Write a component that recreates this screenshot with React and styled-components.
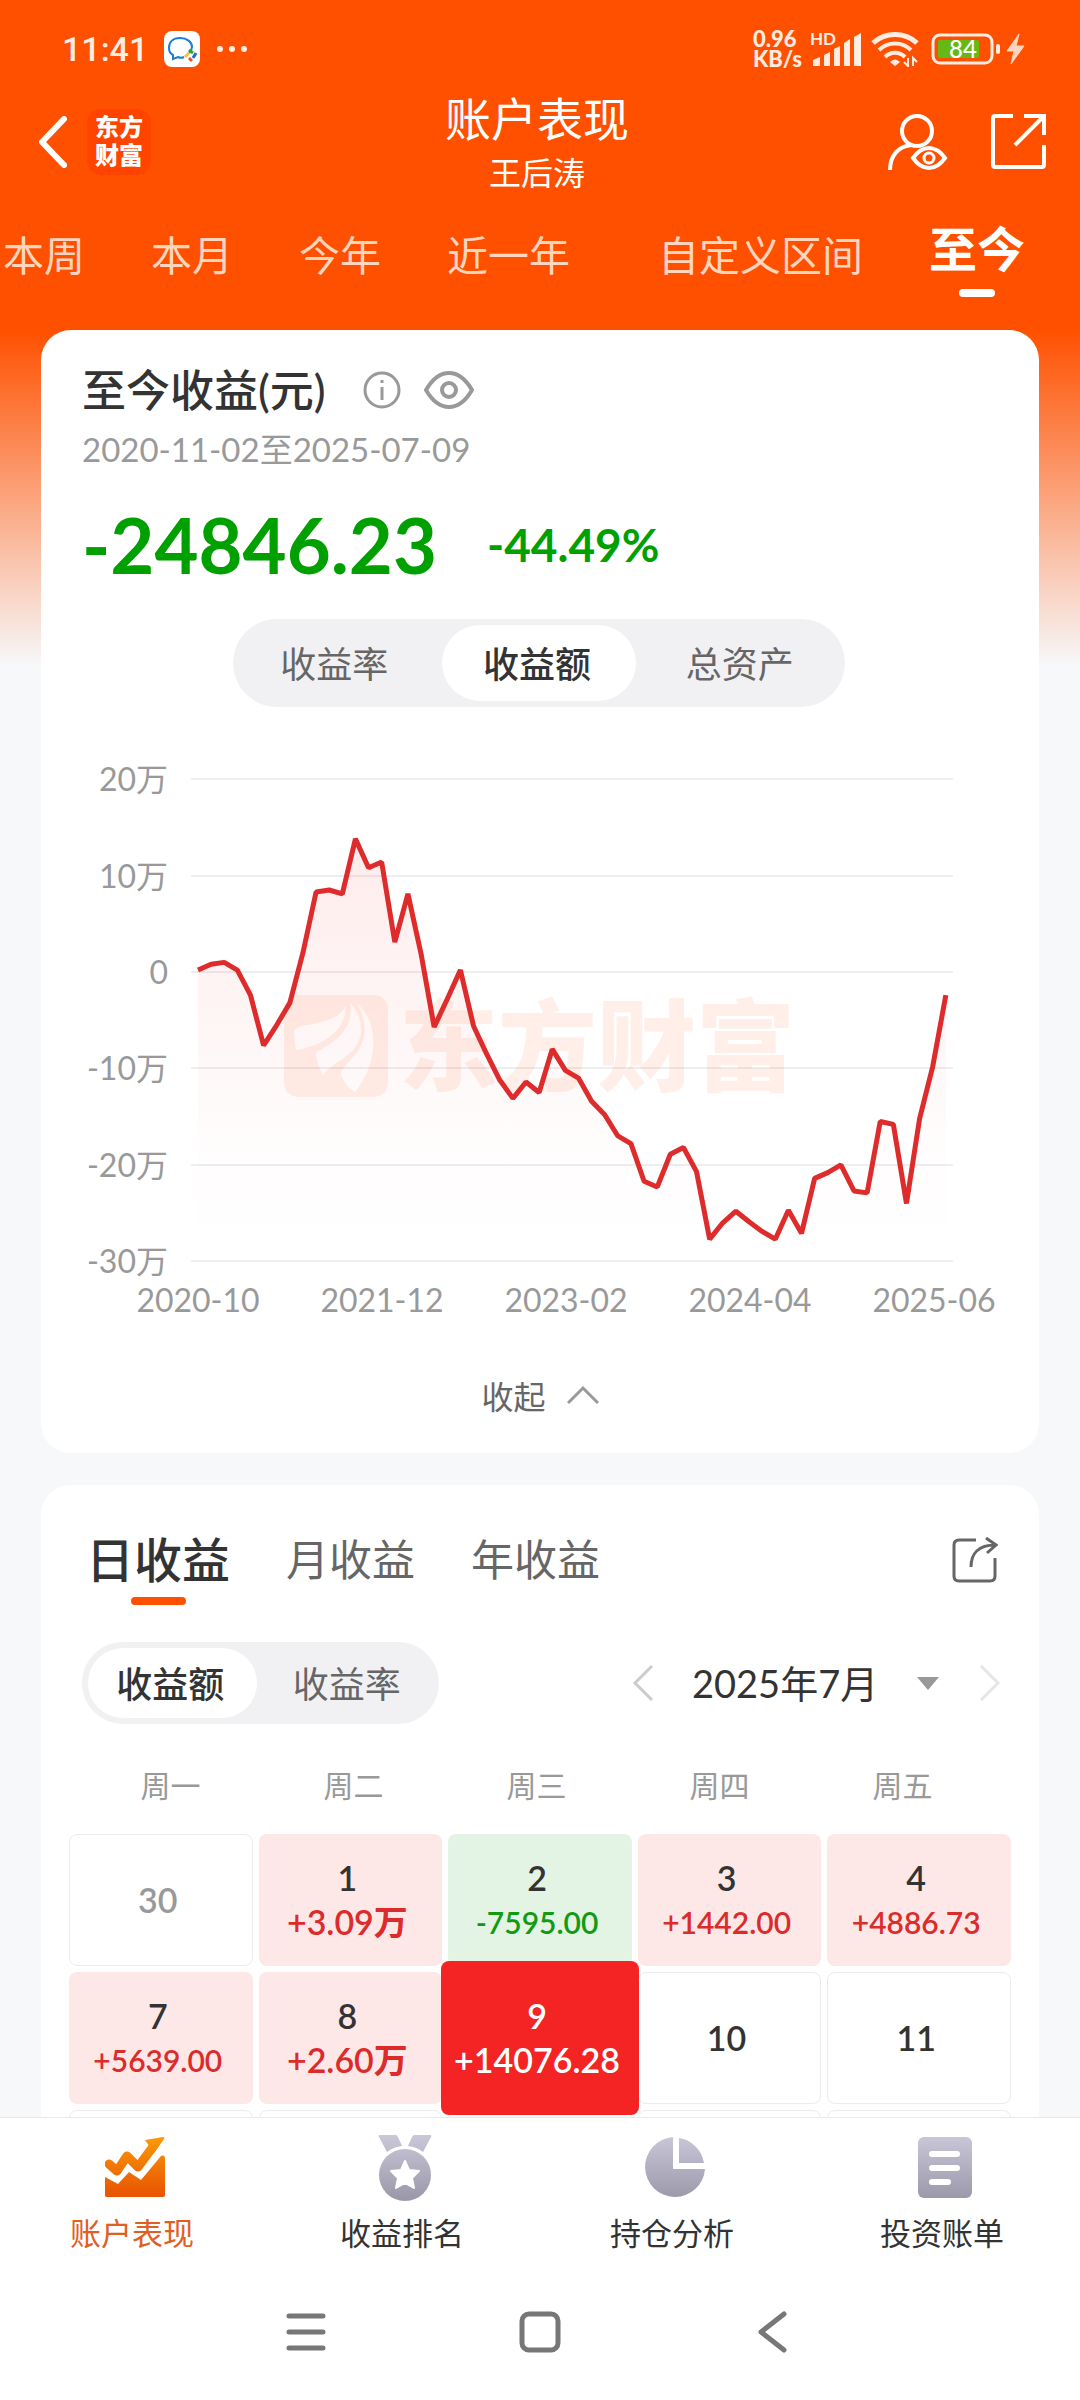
import { useState } from "react";
import styled, { createGlobalStyle } from "styled-components";

const GlobalStyle = createGlobalStyle`
    * {
        box-sizing: border-box;
    }
    body {
        margin: 0;
        background: #f7f8fa;
        font-family: Lato, "Noto Sans CJK SC", sans-serif;
        color: #333;
    }
    button, select {
        font: inherit;
        color: inherit;
        border: 0;
        padding: 0;
        margin: 0;
        background: none;
        cursor: pointer;
    }
    svg {
        display: block;
        flex: none;
    }
`;

const Page = styled.div`
    display: flex;
    flex-direction: column;
    height: 100vh;
`;

const Header = styled.header`
    background: #ff5000;
    color: #fff;
    flex: none;
`;

// phone status bar
const StatusBar = styled.div`
    display: flex;
    justify-content: space-between;
    height: 90px;
    padding: 8px 55px 0 62px;
    color: #ffece2;
`;

const StatusGroup = styled.div`
    display: flex;
    align-items: center;
    gap: ${props => props.$gap}px;
`;

const Clock = styled.span`
    font-family: Roboto, sans-serif;
    font-size: 34px;
    font-weight: 500;
`;

const NetSpeed = styled.span`
    font-size: 22px;
    font-weight: 900;
    line-height: 20px;
`;

const TitleBar = styled.div`
    display: grid;
    grid-template-columns: 1fr auto 1fr;
    align-items: center;
    padding: 0 33px 0 27px;
`;

const TitleSide = styled.div`
    display: flex;
    align-items: center;
    justify-content: ${props => props.$end ? 'flex-end' : 'flex-start'};
    gap: ${props => props.$end ? 42 : 20}px;
`;

const IconButton = styled.button`
    display: flex;
    align-items: center;
    justify-content: center;
`;

const BackButton = styled(IconButton)`
    padding-left: 12px;
`;

const BrandLogo = styled.span`
    width: 64px;
    height: 66px;
    padding: 4px 0;
    border-radius: 14px;
    background: #ff4400;
    font-size: 24px;
    font-weight: 900;
    line-height: 28px;
    text-align: center;
`;

const TitleText = styled.div`
    text-align: center;
    h1 {
        margin: 0;
        font-size: 46px;
        font-weight: 400;
        line-height: 58px;
    }
    p {
        margin: 5px 0 0;
        font-size: 32px;
        line-height: 40px;
    }
`;

const RangeTabs = styled.nav`
    display: flex;
    gap: 66px;
    height: 137px;
    padding-left: 3px;
    overflow: hidden;
`;

const RangeTab = styled.button`
    display: flex;
    flex-direction: column;
    align-items: ${props => props.$active ? 'center' : 'flex-start'};
    flex: none;
    min-width: ${props => props.$wide ? '145px' : '0'};
    padding-top: ${props => props.$active ? 28 : 35}px;
    font-size: ${props => props.$active ? 48 : 41}px;
    font-weight: ${props => props.$active ? 700 : 400};
    line-height: 56px;
    color: ${props => props.$active ? '#fff' : '#ffd5c0'};
    white-space: nowrap;
`;

const TabLine = styled.span`
    width: ${props => props.$width}px;
    height: 8px;
    margin-top: ${props => props.$top}px;
    border-radius: 4px;
    background: ${props => props.$color};
`;

const Main = styled.main`
    flex: 1;
    min-height: 0;
    overflow-y: auto;
    scrollbar-width: none;
    padding: 0 41px 32px;
    background: linear-gradient(#ff5000, #f7f8fa 335px) no-repeat #f7f8fa;
    background-size: 100% 335px;
`;

const Card = styled.section`
    background: #fff;
    border-radius: 30px;
    & + & {
        margin-top: 32px;
    }
`;

const Summary = styled.div`
    padding: 32px 43px 0 41px;
`;

const SummaryTitle = styled.div`
    display: flex;
    align-items: center;
    h2 {
        margin: 0 36px 0 0;
        font-size: 44px;
        font-weight: 500;
        line-height: 56px;
    }
    button + button {
        margin-left: 22px;
    }
`;

const DateRange = styled.p`
    margin: 9px 0 0;
    font-size: 33px;
    line-height: 44px;
    color: #999;
`;

const Totals = styled.div`
    display: flex;
    align-items: center;
    gap: 50px;
    margin-top: 29px;
    line-height: 90px;
    color: #00a000;
`;

const TotalAmount = styled.strong`
    font-size: 76px;
    font-weight: 700;
`;

const TotalRate = styled.span`
    font-size: 46px;
    font-weight: 700;
`;

const Segmented = styled.div`
    display: flex;
    gap: 8px;
    width: ${props => props.$width};
    height: ${props => props.$height}px;
    margin: ${props => props.$margin || 0};
    padding: 6px;
    border-radius: 44px;
    background: #f1f1f4;
`;

const Segment = styled.button`
    flex: 1;
    padding: 0 4px 3px 0;
    border-radius: 40px;
    font-size: 36px;
    font-weight: ${props => props.$active ? 500 : 400};
    color: ${props => props.$active ? '#333' : '#666'};
    background: ${props => props.$active ? '#fff' : 'transparent'};
`;

const ChartSvg = styled.svg`
    width: 100%;
    height: auto;
    text {
        font-size: 32px;
        fill: #999;
    }
    text.mark {
        font-size: 99px;
        font-weight: 900;
        fill: #ff5000;
        fill-opacity: 0.09;
    }
`;

const CollapseButton = styled.button`
    display: flex;
    align-items: center;
    justify-content: center;
    gap: 21px;
    width: 100%;
    height: 113px;
    padding-bottom: 4px;
    font-size: 32px;
    color: #666;
`;

const ProfitHead = styled.div`
    display: flex;
    align-items: flex-start;
    padding: 43px 41px 0 45px;
`;

const ProfitTab = styled.button`
    display: flex;
    flex-direction: column;
    align-items: center;
    margin-right: 56px;
    font-size: ${props => props.$active ? 48 : 43}px;
    font-weight: ${props => props.$active ? 500 : 400};
    line-height: 64px;
    color: ${props => props.$active ? '#333' : '#666'};
`;

const ShareButton = styled(IconButton)`
    height: 64px;
    margin-left: auto;
`;

const FilterRow = styled.div`
    display: flex;
    align-items: center;
    justify-content: space-between;
    padding: 0 38px 0 41px;
    margin-top: 37px;
`;

const MonthPicker = styled.div`
    display: flex;
    align-items: center;
`;

const MonthSelect = styled.select`
    appearance: none;
    margin: 0 38px;
    font-size: 38px;
    line-height: 56px;
    outline: none;
`;

const Caret = styled.span`
    margin-right: 40px;
    border: 11px solid transparent;
    border-top: 13px solid #999;
    border-bottom: 0;
`;

const Calendar = styled.table`
    display: block;
    padding: 39px 28px 28px;
    thead, tbody {
        display: block;
    }
    tr {
        display: grid;
        grid-template-columns: repeat(5, 1fr);
    }
    thead tr {
        padding: 0 17px 27px 10px;
    }
    tbody tr {
        gap: 6px;
        margin-bottom: 6px;
    }
`;

const WeekDay = styled.th`
    padding: 0;
    font-size: 30px;
    font-weight: 400;
    line-height: 44px;
    color: #999;
`;

const DayCell = styled.td`
    position: relative;
    height: 132px;
    padding: 0;
`;

const dayColors = {
    up: { bg: '#fde8e7', text: '#dc2b2b' },
    down: { bg: '#e3f4e5', text: '#129a12' },
    today: { bg: '#f42424', text: '#fff' },
    none: { bg: '#fff', text: '#333' },
};

// the selected day is larger than its cell and lies over the ones next to it
const DayButton = styled.button`
    position: absolute;
    inset: ${props => props.$kind === 'today' ? '-11px -7px' : '0'};
    z-index: ${props => props.$kind === 'today' ? 1 : 0};
    display: flex;
    flex-direction: column;
    align-items: center;
    justify-content: center;
    padding-right: 6px;
    border: ${props => props.$kind === 'none' ? '1px solid #ececec' : '0'};
    border-radius: 8px;
    background: ${props => dayColors[props.$kind].bg};
    font-size: 34px;
    font-weight: 600;
    line-height: 44px;
    color: ${props => props.$muted ? '#999' : props.$kind === 'today' ? '#fff' : '#333'};
`;

const DayAmount = styled.span`
    font-size: ${props => props.$small ? 30 : 34}px;
    color: ${props => dayColors[props.$kind].text};
`;

const BottomNav = styled.nav`
    display: grid;
    grid-template-columns: repeat(4, 1fr);
    flex: none;
    border-top: 1px solid #e9e9e9;
    background: #fff;
`;

const NavItem = styled.a`
    display: flex;
    flex-direction: column;
    align-items: center;
    gap: 10px;
    padding: 17px 0 9px;
    font-size: 31px;
    line-height: 44px;
    color: ${props => props.$active ? '#e0601f' : '#333'};
    text-decoration: none;
`;

const NavLabel = styled.span`
    padding-right: 6px;
`;

const SystemBar = styled.div`
    display: flex;
    justify-content: center;
    align-items: center;
    gap: 193px;
    flex: none;
    height: 136px;
    background: #fff;
`;

const ranges = ['本周', '本月', '今年', '近一年', '自定义区间', '至今'];

// total profit by month, in 万
const profits = [
    0.2, 0.8, 1, 0.2, -2.4, -7.6, -5.5, -3.2, 2, 8.3, 8.5, 8.1, 13.8, 10.8, 11.4, 3.1, 8.1, 1.9, -5.7,
    -2.8, 0.2, -5.6, -8.5, -11.2, -13.1, -11.4, -12.5, -8, -10.2, -11, -13.4, -14.8, -17, -17.8, -21.7,
    -22.3, -18.9, -18.2, -20.7, -27.7, -26, -24.8, -25.9, -26.9, -27.7, -24.7, -27.1, -21.4, -20.8, -20,
    -22.7, -22.9, -15.5, -15.8, -24, -15.2, -9.8, -2.4,
];
const yTicks = [20, 10, 0, -10, -20, -30];
const xTicks = ['2020-10', '2021-12', '2023-02', '2024-04', '2025-06'];

const weekDays = ['周一', '周二', '周三', '周四', '周五'];
const weeks = [
    [
        { day: 30, kind: 'none', muted: true },
        { day: 1, kind: 'up', amount: '+3.09万' },
        { day: 2, kind: 'down', amount: '-7595.00' },
        { day: 3, kind: 'up', amount: '+1442.00' },
        { day: 4, kind: 'up', amount: '+4886.73' },
    ],
    [
        { day: 7, kind: 'up', amount: '+5639.00' },
        { day: 8, kind: 'up', amount: '+2.60万' },
        { day: 9, kind: 'today', amount: '+14076.28' },
        { day: 10, kind: 'none' },
        { day: 11, kind: 'none' },
    ],
    Array(5).fill({ kind: 'none' }),
];

function Chevron({ width, height, points, color, stroke = 3, round }) {
    return (
        <svg width={width} height={height} viewBox={`0 0 ${width} ${height}`} fill="none" aria-hidden="true">
            <polyline points={points} stroke={color} strokeWidth={stroke}
                strokeLinecap={round ? 'round' : 'butt'} strokeLinejoin={round ? 'round' : 'miter'} />
        </svg>
    );
}

function PhoneStatus() {
    return (
        <StatusBar>
            <StatusGroup $gap={16}>
                <Clock>11:41</Clock>
                <svg width="36" height="36" viewBox="0 0 36 36" fill="none">
                    <rect width="36" height="36" rx="8" fill="#fff" />
                    <path d="M25 22c2-2 3-4 3-6 0-5-5-9-12-9S5 11 5 17c0 3 2 6 4 7v4l5-2c2 1 4 1 6 0" stroke="#1c7ed0" strokeWidth="2" />
                    <path d="M25 19l4 3" stroke="#2fa52f" strokeWidth="3" />
                    <path d="M32 22l-3 5" stroke="#1c6fd0" strokeWidth="3" />
                    <path d="M28 30l-3-3" stroke="#e2562a" strokeWidth="3" />
                    <path d="M21 26l4-4" stroke="#f5c433" strokeWidth="3" />
                </svg>
                <svg width="32" height="8" viewBox="0 0 32 8" fill="#ffece2">
                    <circle cx="4" cy="4" r="3" />
                    <circle cx="16" cy="4" r="3" />
                    <circle cx="28" cy="4" r="3" />
                </svg>
            </StatusGroup>
            <StatusGroup $gap={7}>
                <NetSpeed>0.96<br />KB/s</NetSpeed>
                <svg width="54" height="40" viewBox="805 30 54 40" fill="#ffece2">
                    <text x="806" y="46" fontSize="17" fontWeight="700">HD</text>
                    <path d="M809 67v-6l7-3v9zM820 67V56l6-3v14zM830 67V50l6-3v20zM840 67V44l6-4v27zM850 67V38l7-4v33z" />
                </svg>
                <svg width="54" height="36" viewBox="868 33 54 36" fill="none" stroke="#ffece2" strokeWidth="4">
                    <path d="M871 45a33 33 0 0 1 44 0" strokeWidth="5" />
                    <path d="M877 52a23 23 0 0 1 32 0" />
                    <path d="M883 59a14 14 0 0 1 20 0" />
                    <path d="M893 68l-5-4q5-5 10 0z" fill="#ffece2" stroke="none" />
                    <path d="M906 60v8l-4-4M911 68v-8l4 4" strokeWidth="2" />
                </svg>
                <svg width="94" height="32" viewBox="931 33 94 32">
                    <rect x="933" y="35" width="59" height="28" rx="7" fill="none" stroke="#ffece2" strokeWidth="3" />
                    <rect x="938" y="40" width="41" height="18" rx="2" fill="#66b814" />
                    <rect x="996" y="44" width="4" height="10" rx="2" fill="#ffece2" />
                    <text x="963" y="58" fontSize="24" fontWeight="500" textAnchor="middle" fill="#fff">84</text>
                    <path d="M1019 34l-12 17h7l-3 13 13-18h-8z" fill="#ffd5c0" stroke="#ffd5c0" strokeWidth="1" />
                </svg>
            </StatusGroup>
        </StatusBar>
    );
}

function ProfitChart() {
    const y = value => 265 - value * 9.645;
    const points = profits.map((value, i) => `${157 + i * 13.12},${y(value)}`).join(' ');

    return (
        <ChartSvg viewBox="0 0 998 633" role="img" aria-label="收益额走势">
            <defs>
                <linearGradient id="area" x1="0" y1="0" x2="0" y2="1">
                    <stop offset="0" stopColor="#f42424" stopOpacity="0.09" />
                    <stop offset="0.75" stopColor="#f42424" stopOpacity="0.01" />
                    <stop offset="1" stopColor="#f42424" stopOpacity="0" />
                </linearGradient>
            </defs>
            {yTicks.map(tick => (
                <g key={tick}>
                    <line x1="150" x2="912" y1={Math.round(y(tick))} y2={Math.round(y(tick))} stroke="#eceeef" strokeWidth="2" />
                    <text x="127" y={y(tick) + 12} textAnchor="end">{tick === 0 ? 0 : `${tick}万`}</text>
                </g>
            ))}
            {xTicks.map((tick, i) => (
                <text key={tick} x={157 + i * 184} y="605" textAnchor="middle">{tick}</text>
            ))}
            <path
                transform="translate(243 288)"
                fill="#ff5000"
                fillOpacity="0.09"
                fillRule="evenodd"
                d="M16 0H88Q104 0 104 16V86Q104 102 88 102H16Q0 102 0 86V16Q0 0 16 0Z
                   M62 10C55 27 30 28 18 31Q10 32 10 39L12 55C36 51 62 38 62 10Z
                   M66 8C70 34 52 46 33 57Q30 62 39 80C48 66 74 62 77 37Q78 20 66 8Z
                   M73 9C85 28 82 48 70 61C60 72 55 76 58 82Q62 92 71 97C98 64 92 22 73 9Z"
            />
            <text className="mark" x="358" y="376">东方财富</text>
            <polygon points={`157,554 ${points} 905,554`} fill="url(#area)" />
            <polyline points={points} fill="none" stroke="#de2b2b" strokeWidth="5" strokeLinejoin="bevel" />
        </ChartSvg>
    );
}

function CalendarTable() {
    return (
        <Calendar>
            <thead>
                <tr>{weekDays.map(name => <WeekDay key={name} scope="col">{name}</WeekDay>)}</tr>
            </thead>
            <tbody>
                {weeks.map((week, row) => (
                    <tr key={row}>
                        {week.map(({ day, kind, amount, muted }, column) => (
                            <DayCell key={column}>
                                <DayButton type="button" $kind={kind} $muted={muted}>
                                    {day}
                                    {amount && <DayAmount $kind={kind} $small={amount.length === 8}>{amount}</DayAmount>}
                                </DayButton>
                            </DayCell>
                        ))}
                    </tr>
                ))}
            </tbody>
        </Calendar>
    );
}

// bottom nav icons
function NavIcon({ name }) {
    const fill = name === 'chart' ? 'url(#navOrange)' : 'url(#navGrey)';
    return (
        <svg width="60" height="66" viewBox="0 0 60 66" fill={fill}>
            <defs>
                <linearGradient id="navOrange" gradientUnits="userSpaceOnUse" x1="0" y1="2" x2="0" y2="62">
                    <stop offset="0" stopColor="#fa9a08" />
                    <stop offset="1" stopColor="#e85200" />
                </linearGradient>
                <linearGradient id="navGrey" gradientUnits="userSpaceOnUse" x1="0" y1="0" x2="0" y2="64">
                    <stop offset="0" stopColor="#c9c7d8" />
                    <stop offset="1" stopColor="#9b98aa" />
                </linearGradient>
            </defs>
            {name === 'chart' && (
                <>
                    <path d="M4 29l8 7 10-15 11 11L50 9" fill="none" stroke={fill} strokeWidth="9" strokeLinecap="round" strokeLinejoin="round" />
                    <path d="M40 5l18-3q2 0 1 2L49 18zM0 42l13 7 11-12 12 8 20-24q4-2 4 3v36q0 2-2 2H2q-2 0-2-2z" />
                </>
            )}
            {name === 'medal' && (
                <>
                    <path d="M5 0h16q1 0 2 2l4 9q-9 1-15 6L4 2q-1-2 1-2zM55 0H39q-1 0-2 2l-4 9q9 1 15 6l8-15q1-2-1-2z" />
                    <circle cx="30" cy="40" r="26" />
                    <path d="M30 26l4 9 10 1-7 7 2 10-9-5-9 5 2-10-7-7 10-1z" fill="#fff" stroke="#fff" strokeWidth="2" strokeLinejoin="round" />
                </>
            )}
            {name === 'pie' && (
                <path d="M28 2v32h32A30 30 0 1 1 28 2zM34 3a30 30 0 0 1 25 25H34z" />
            )}
            {name === 'bill' && (
                <>
                    <rect x="3" y="2" width="54" height="61" rx="6" />
                    <path d="M17 19h25M17 33h25M17 47h16" stroke="#fff" strokeWidth="6" strokeLinecap="round" />
                </>
            )}
        </svg>
    );
}

const navItems = [
    { icon: 'chart', label: '账户表现' },
    { icon: 'medal', label: '收益排名' },
    { icon: 'pie', label: '持仓分析' },
    { icon: 'bill', label: '投资账单' },
];

export default function App() {
    const [range, setRange] = useState('至今');
    const [chartMode, setChartMode] = useState('收益额');
    const [period, setPeriod] = useState('日收益');
    const [calendarMode, setCalendarMode] = useState('收益额');

    return (
        <Page>
            <GlobalStyle />
            <Header>
                <PhoneStatus />
                <TitleBar>
                    <TitleSide>
                        <BackButton type="button" aria-label="返回">
                            <Chevron width={28} height={52} points="25,3 3,26 25,49" color="#fff" stroke={6} round />
                        </BackButton>
                        <BrandLogo>东方<br />财富</BrandLogo>
                    </TitleSide>
                    <TitleText>
                        <h1>账户表现</h1>
                        <p>王后涛</p>
                    </TitleText>
                    <TitleSide $end>
                        <IconButton type="button" aria-label="账户查看">
                            <svg width="62" height="60" viewBox="888 111 62 60" fill="none" stroke="#fff" strokeWidth="4">
                                <circle cx="918" cy="130" r="15" />
                                <path d="M891 169c0-14 8-24 22-25" />
                                <path d="M914 157c5-7 10-10 16-10s11 3 16 10c-5 7-10 10-16 10s-11-3-16-10Z" />
                                <circle cx="930" cy="157" r="5" strokeWidth="3" />
                            </svg>
                        </IconButton>
                        <IconButton type="button" aria-label="分享">
                            <svg width="56" height="56" viewBox="991 113 56 56" fill="none" stroke="#fff" strokeWidth="4">
                                <path d="M1013 115h-18q-2 0-2 2v47q0 2 2 2h47q2 0 2-2v-20M1024 115h20v19M1043 116l-28 28" />
                            </svg>
                        </IconButton>
                    </TitleSide>
                </TitleBar>
                <RangeTabs>
                    {ranges.map(name => (
                        <RangeTab key={name} type="button" $active={name === range} $wide={name === '近一年'} onClick={() => setRange(name)}>
                            {name}
                            {name === range && <TabLine $width={36} $top={12} $color="#fff" />}
                        </RangeTab>
                    ))}
                </RangeTabs>
            </Header>

            <Main>
                <Card>
                    <Summary>
                        <SummaryTitle>
                            <h2>至今收益(元)</h2>
                            <IconButton type="button" aria-label="说明">
                                <svg width="40" height="40" viewBox="0 0 40 40" fill="none" stroke="#999" strokeWidth="3">
                                    <circle cx="20" cy="20" r="17" />
                                    <path d="M20 17v13M20 10v3" />
                                </svg>
                            </IconButton>
                            <IconButton type="button" aria-label="显示金额">
                                <svg width="50" height="40" viewBox="0 0 50 40" fill="none" stroke="#999" strokeWidth="4">
                                    <path d="M2 20C9 8 16 3 25 3s16 5 23 17c-7 12-14 17-23 17S9 32 2 20Z" strokeLinejoin="round" />
                                    <circle cx="25" cy="20" r="7" />
                                </svg>
                            </IconButton>
                        </SummaryTitle>
                        <DateRange>2020-11-02至2025-07-09</DateRange>
                        <Totals>
                            <TotalAmount>-24846.23</TotalAmount>
                            <TotalRate>-44.49%</TotalRate>
                        </Totals>
                        <Segmented $width="67%" $height={88} $margin="29px auto 0">
                            {['收益率', '收益额', '总资产'].map(name => (
                                <Segment key={name} type="button" $active={name === chartMode} onClick={() => setChartMode(name)}>{name}</Segment>
                            ))}
                        </Segmented>
                    </Summary>
                    <ProfitChart />
                    <CollapseButton type="button">
                        收起
                        <Chevron width={32} height={20} points="1,18 16,3 31,18" color="#999" />
                    </CollapseButton>
                </Card>

                <Card>
                    <ProfitHead>
                        {['日收益', '月收益', '年收益'].map(name => (
                            <ProfitTab key={name} type="button" $active={name === period} onClick={() => setPeriod(name)}>
                                {name}
                                {name === period && <TabLine $width={55} $top={5} $color="#ff5000" />}
                            </ProfitTab>
                        ))}
                        <ShareButton type="button" aria-label="分享收益">
                            <svg width="46" height="46" viewBox="952 1538 46 46" fill="none" stroke="#666" strokeWidth="3">
                                <path d="M976 1541h-17q-5 0-5 5v31q0 5 5 5h31q5 0 5-5v-18" />
                                <path d="M986 1539l10 7-9 8M971 1568c0-14 8-22 24-22" />
                            </svg>
                        </ShareButton>
                    </ProfitHead>
                    <FilterRow>
                        <Segmented $width="357px" $height={82}>
                            {['收益额', '收益率'].map(name => (
                                <Segment key={name} type="button" $active={name === calendarMode} onClick={() => setCalendarMode(name)}>{name}</Segment>
                            ))}
                        </Segmented>
                        <MonthPicker>
                            <IconButton type="button" aria-label="上个月">
                                <Chevron width={22} height={36} points="20,1 3,18 20,35" color="#ccc" />
                            </IconButton>
                            <MonthSelect aria-label="月份" defaultValue="2025年7月">
                                <option>2025年7月</option>
                            </MonthSelect>
                            <Caret />
                            <IconButton type="button" aria-label="下个月">
                                <Chevron width={22} height={36} points="2,1 19,18 2,35" color="#e6e6e6" />
                            </IconButton>
                        </MonthPicker>
                    </FilterRow>
                    <CalendarTable />
                </Card>
            </Main>

            <BottomNav>
                {navItems.map(({ icon, label }) => (
                    <NavItem key={icon} href={`#${icon}`} $active={icon === 'chart'}>
                        <NavIcon name={icon} />
                        <NavLabel>{label}</NavLabel>
                    </NavItem>
                ))}
            </BottomNav>
            <SystemBar>
                <IconButton type="button" aria-label="最近任务">
                    <svg width="40" height="42" viewBox="0 0 40 42" stroke="#777" strokeWidth="5" strokeLinecap="round">
                        <path d="M3 5h34M3 21h34M3 37h34" />
                    </svg>
                </IconButton>
                <IconButton type="button" aria-label="主屏幕">
                    <svg width="42" height="42" viewBox="0 0 42 42" fill="none" stroke="#777" strokeWidth="5">
                        <rect x="3" y="3" width="36" height="36" rx="7" />
                    </svg>
                </IconButton>
                <IconButton type="button" aria-label="后退">
                    <Chevron width={40} height={42} points="30,3 7,21 30,39" color="#777" stroke={5} round />
                </IconButton>
            </SystemBar>
        </Page>
    );
}
